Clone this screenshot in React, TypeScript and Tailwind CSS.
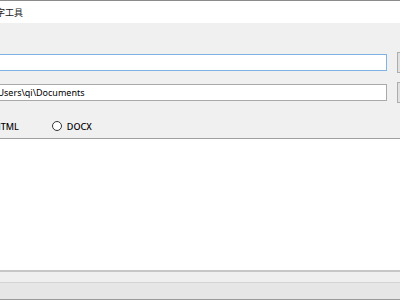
export default function App() {
  const ui = { fontFamily: '"Noto Sans", "Noto Sans CJK SC", sans-serif' };

  return (
    <div className="w-[400px] h-[300px] overflow-hidden flex flex-col bg-[#f0f0f0] text-black" style={ui}>
      {/* window top edge + title */}
      <div className="h-px bg-[#8c8c8c]" />
      <div className="h-[22px] bg-white flex items-center overflow-hidden">
        <span className="ml-[-4px] text-[9px] leading-none whitespace-nowrap text-[#1a1a1a]">字工具</span>
      </div>

      {/* form area */}
      <div className="flex flex-col">
        <div className="h-[31px]" />
        <div className="h-[17px] flex items-center">
          <div className="shrink-0 ml-[-10px] w-[397px] h-[17px] bg-white border border-[#7fb3e5]" />
          <div className="shrink-0 ml-[10px] w-[30px] h-[21px] bg-[#e1e1e1] border border-[#adadad]" />
        </div>
        <div className="h-[13px]" />
        <div className="h-[17px] flex items-center">
          <div className="shrink-0 ml-[-10px] w-[397px] h-[17px] bg-white border border-[#a9a9a9] flex items-center overflow-hidden">
            <span className="ml-[-5px] text-[9px] leading-none whitespace-nowrap">C:\Users\qi\Documents</span>
          </div>
          <div className="shrink-0 ml-[10px] w-[30px] h-[21px] bg-[#e1e1e1] border border-[#adadad]" />
        </div>
        <div className="h-[37px] flex items-center pt-[13px] text-[9px] font-medium leading-none">
          <span className="ml-[-6px] whitespace-nowrap">HTML</span>
          <span className="ml-[33px] w-[10px] h-[10px] rounded-full border border-[#333] bg-white" />
          <span className="ml-[5px] whitespace-nowrap">DOCX</span>
        </div>
      </div>

      <div className="h-px bg-[#a0a0a0]" />
      <div className="h-[131px] bg-white" />

      {/* status strip */}
      <div className="h-[2px] bg-[#c6c6c6]" />
      <div className="h-[10px] bg-[#efefef]" />
      <div className="h-px bg-[#d4d4d4]" />
      <div className="h-[16px] bg-[#e6e6e6]" />
      <div className="h-px bg-[#9a9a9a]" />
    </div>
  );
}
